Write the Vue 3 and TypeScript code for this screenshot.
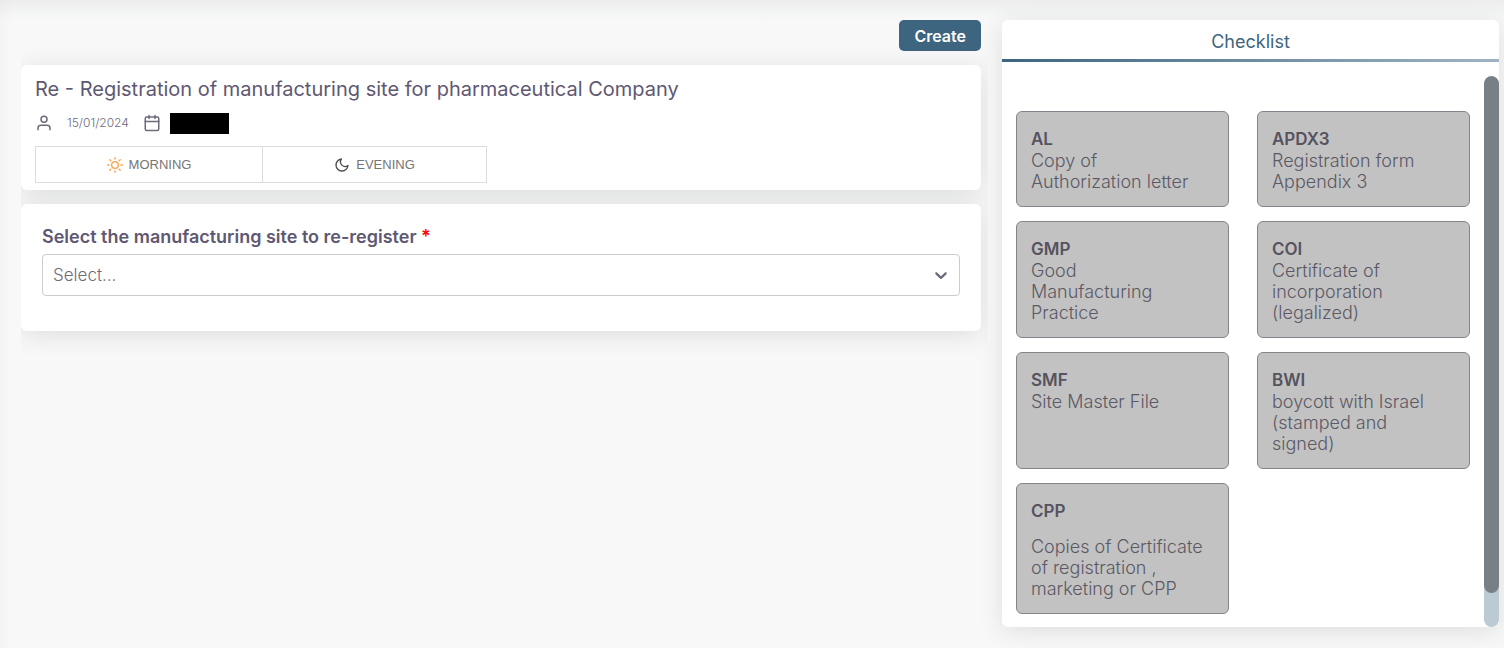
<script setup lang="ts">
import { computed, onBeforeUnmount, onMounted, ref } from 'vue'

interface ChecklistItem {
  code: string
  lines: string[]
  spaced?: boolean
}

const items: ChecklistItem[] = [
  { code: 'AL', lines: ['Copy of', 'Authorization letter'] },
  { code: 'APDX3', lines: ['Registration form', 'Appendix 3'] },
  { code: 'GMP', lines: ['Good', 'Manufacturing', 'Practice'] },
  { code: 'COI', lines: ['Certificate of', 'incorporation', '(legalized)'] },
  { code: 'SMF', lines: ['Site Master File'] },
  { code: 'BWI', lines: ['boycott with Israel', '(stamped and', 'signed)'] },
  { code: 'CPP', lines: ['Copies of Certificate', 'of registration ,', 'marketing or CPP'], spaced: true },
]

const scroller = ref<HTMLElement | null>(null)
const visible = ref(1)
const content = ref(1)
const offset = ref(0)

function measure(): void {
  const el = scroller.value
  if (!el) return
  visible.value = el.clientHeight
  content.value = el.scrollHeight
  offset.value = el.scrollTop
}

const thumbStyle = computed(() => ({
  height: `${(visible.value / content.value) * 100}%`,
  marginTop: `${(offset.value / content.value) * visible.value}px`,
}))

onMounted(() => {
  measure()
  window.addEventListener('resize', measure)
})

onBeforeUnmount(() => window.removeEventListener('resize', measure))
</script>

<template>
  <div class="page">
    <main class="main">
      <div class="toolbar">
        <button type="button" class="create">Create</button>
      </div>

      <section class="card summary">
        <h1 class="title">Re - Registration of manufacturing site for pharmaceutical Company</h1>
        <div class="meta">
          <svg class="icon" viewBox="0 0 24 24" aria-hidden="true">
            <path d="M20 21v-2a4 4 0 0 0-4-4H8a4 4 0 0 0-4 4v2" />
            <circle cx="12" cy="7" r="4" />
          </svg>
          <span class="date">15/01/2024</span>
          <svg class="icon" viewBox="0 0 24 24" aria-hidden="true">
            <rect x="3" y="4" width="18" height="18" rx="2" />
            <path d="M16 2v4M8 2v4M3 10h18" />
          </svg>
          <span class="redacted"></span>
        </div>
        <div class="periods">
          <button type="button" class="period">
            <svg class="period-icon sun" viewBox="0 0 24 24" aria-hidden="true">
              <circle cx="12" cy="12" r="5" />
              <path d="M12 1v2M12 21v2M4.2 4.2l1.4 1.4M18.4 18.4l1.4 1.4M1 12h2M21 12h2M4.2 19.8l1.4-1.4M18.4 5.6l1.4-1.4" />
            </svg>
            <span>MORNING</span>
          </button>
          <button type="button" class="period">
            <svg class="period-icon moon" viewBox="0 0 24 24" aria-hidden="true">
              <path d="M21 12.8A9 9 0 1 1 11.2 3 7 7 0 0 0 21 12.8z" />
            </svg>
            <span>EVENING</span>
          </button>
        </div>
      </section>

      <section class="card form">
        <label class="label" for="site">Select the manufacturing site to re-register <span class="required">*</span></label>
        <div class="select-wrap">
          <select id="site" class="select">
            <option value="">Select...</option>
          </select>
          <svg class="chevron" viewBox="0 0 20 20" aria-hidden="true">
            <path d="M4.516 7.548c0.436-0.446 1.043-0.481 1.576 0l3.908 3.747 3.908-3.747c0.533-0.481 1.141-0.446 1.574 0 0.436 0.445 0.408 1.197 0 1.615-0.406 0.418-4.695 4.502-4.695 4.502-0.217 0.223-0.502 0.335-0.787 0.335s-0.57-0.112-0.789-0.335c0 0-4.287-4.084-4.695-4.502s-0.436-1.17 0-1.615z" />
          </svg>
        </div>
      </section>
    </main>

    <aside class="panel">
      <h2 class="panel-title">Checklist</h2>
      <div class="panel-body">
        <div ref="scroller" class="scroller" @scroll="measure">
          <ul class="grid">
            <li v-for="item in items" :key="item.code" class="item">
              <strong class="code">{{ item.code }}</strong>
              <p class="desc" :class="{ spaced: item.spaced }">{{ item.lines.join('\n') }}</p>
            </li>
          </ul>
        </div>
        <div class="track" aria-hidden="true">
          <div class="thumb" :style="thumbStyle"></div>
        </div>
      </div>
    </aside>
  </div>
</template>

<style>
body {
  background: #f8f8f8;
}
</style>

<style scoped>
* {
  box-sizing: border-box;
}

.page {
  display: grid;
  grid-template-columns: minmax(0, 967fr) minmax(0, 497fr);
  grid-template-rows: minmax(0, 1fr);
  gap: 14px;
  height: 100vh;
  padding: 0 5px 0 21px;
  font-family: Inter, "Open Sans", sans-serif;
  color: #5e5873;
  background:
    linear-gradient(to bottom, rgba(34, 41, 47, 0.05), transparent 20px),
    linear-gradient(to right, rgba(34, 41, 47, 0.02), transparent 12px),
    #f8f8f8;
}

.main {
  display: flex;
  flex-direction: column;
  gap: 14px;
  padding: 20px 7px 24px 0;
  align-self: start;
  overflow: hidden;
}

.toolbar {
  display: flex;
  justify-content: flex-end;
}

.create {
  height: 31px;
  padding: 0 15px;
  border: 0;
  border-radius: 5px;
  background: #3d6580;
  color: #fff;
  font: 600 16px Inter, sans-serif;
}

.card {
  background: #fff;
  border-radius: 6px;
  box-shadow: 0 4px 24px rgba(34, 41, 47, 0.12);
}

.summary {
  padding: 12px 14px 7px;
}

.title {
  margin: 0;
  font-size: 20px;
  line-height: 24px;
  font-weight: 400;
}

.meta {
  display: flex;
  align-items: center;
  margin: 10px 0 12px;
  color: #6e6b7b;
}

.icon {
  width: 18px;
  height: 18px;
  fill: none;
  stroke: #6e6b7b;
  stroke-width: 2;
  stroke-linecap: round;
  stroke-linejoin: round;
}

.date {
  margin: 0 14px;
  font-size: 12px;
  line-height: 18px;
  font-weight: 300;
}

.redacted {
  width: 59px;
  height: 21px;
  margin: 2px 0 0 9px;
  background: #000;
}

.periods {
  display: grid;
  grid-template-columns: 228px 224px;
}

.period {
  display: flex;
  align-items: center;
  justify-content: center;
  gap: 6px;
  height: 37px;
  padding: 0;
  border: 1px solid #dadcdf;
  background: #fff;
  color: #757575;
  font: 13px "Liberation Sans", Arial, sans-serif;
}

.period + .period {
  border-left: 0;
}

.period-icon {
  width: 16px;
  height: 16px;
  fill: none;
  stroke-width: 2;
  stroke-linecap: round;
  stroke-linejoin: round;
}

.sun {
  stroke: #ff9f43;
}

.moon {
  stroke: #4b4b4b;
}

.form {
  padding: 22px 21px 35px;
}

.label {
  display: block;
  margin-bottom: 6px;
  font-size: 18px;
  line-height: 22px;
  font-weight: 600;
}

.required {
  color: #f00;
}

.select-wrap {
  display: grid;
  align-items: center;
}

.select {
  grid-area: 1 / 1;
  appearance: none;
  width: 100%;
  height: 42px;
  padding: 0 10px;
  border: 1px solid #ccc;
  border-radius: 4px;
  background: #fff;
  color: #6e6b7b;
  font: 300 17px Inter, sans-serif;
}

.chevron {
  grid-area: 1 / 1;
  justify-self: end;
  width: 20px;
  height: 20px;
  margin-right: 9px;
  fill: #6e6b7b;
  pointer-events: none;
}

.panel {
  display: flex;
  flex-direction: column;
  min-height: 0;
  margin: 20px 0 21px;
  background: #fff;
  border-radius: 6px;
  box-shadow: 0 4px 24px rgba(34, 41, 47, 0.12);
}

.panel-title {
  margin: 0 0 14px;
  padding: 11px 0 7px;
  border-bottom: 3px solid;
  border-image: linear-gradient(to right, #3d6580, #9fb4c2) 1;
  color: #3d6580;
  font-size: 18px;
  line-height: 21px;
  font-weight: 400;
  text-align: center;
}

.panel-body {
  display: flex;
  flex: 1;
  min-height: 0;
}

.scroller {
  flex: 1;
  min-width: 0;
  overflow-y: auto;
  scrollbar-width: none;
}

.track {
  width: 15px;
  overflow: hidden;
  background: #bccad4;
  border-radius: 8px;
}

.thumb {
  background: #788086;
  border-radius: 8px;
}

.grid {
  display: grid;
  grid-template-columns: repeat(2, minmax(0, 1fr));
  gap: 14px 28px;
  margin: 0;
  padding: 35px 14px 49px;
  list-style: none;
}

.item {
  padding: 16px 14px 14px;
  border: 1px solid #82868b;
  border-radius: 6px;
  background: #c2c2c2;
}

.code {
  display: block;
  font-size: 17px;
  line-height: 22px;
  font-weight: 600;
  color: #56525f;
}

.desc {
  margin: 0;
  font-size: 18px;
  line-height: 21px;
  font-weight: 300;
  color: #5c5965;
  white-space: pre-line;
}

.spaced {
  margin-top: 14px;
}
</style>
